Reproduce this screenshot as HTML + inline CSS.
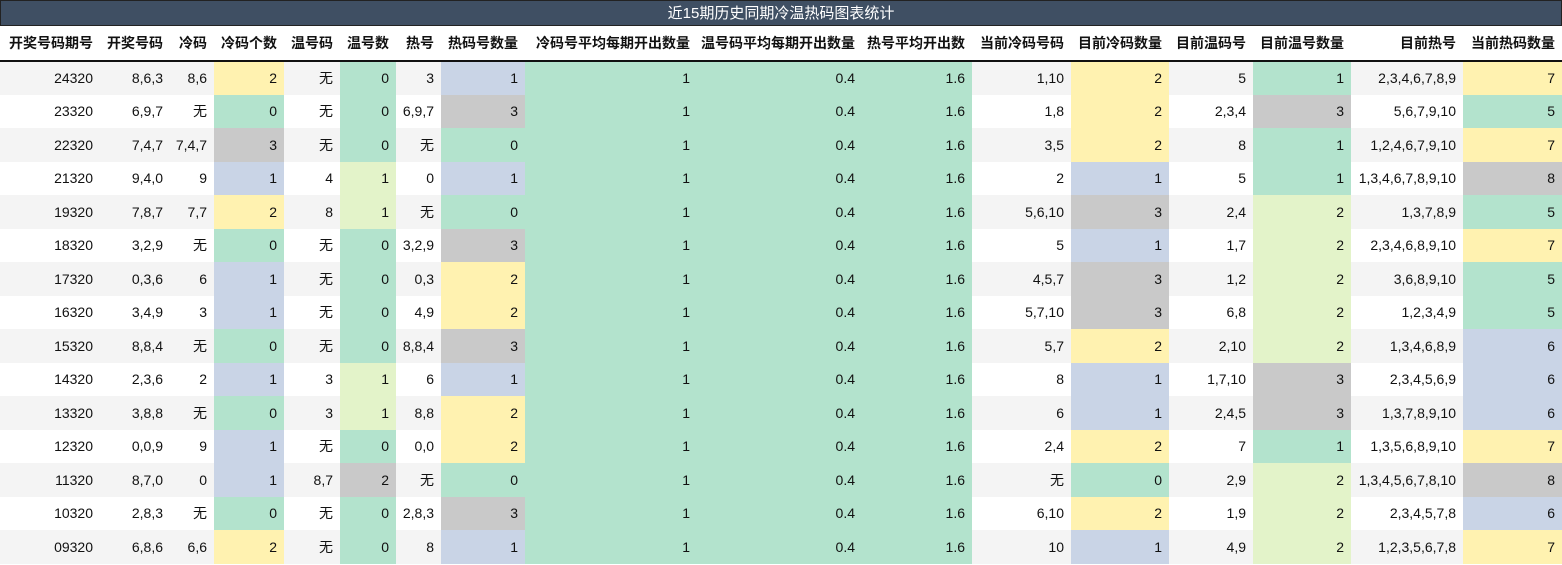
<!DOCTYPE html>
<html><head><meta charset="utf-8"><style>
*{margin:0;padding:0;box-sizing:border-box}
body{width:1562px;height:565px;overflow:hidden;background:#fff;font-family:"Liberation Sans","Noto Sans CJK SC",sans-serif;font-size:14px;color:#111}
.t{height:26px;background:#3f4f63;color:#fff;text-align:center;line-height:25px;font-size:15px;border:1px solid #222}
table{border-collapse:collapse;table-layout:fixed;width:1562px}
th{height:35px;font-weight:bold;text-align:right;padding-right:7px;border-bottom:2px solid #111;white-space:nowrap;font-size:14px}
td{height:33.5px;text-align:right;padding-right:7px;white-space:nowrap}
tr:nth-child(odd) td{background:#f4f4f4}
tr:nth-child(even) td{background:#fff}
tr td.Y{background:#fff2b0}tr td.G{background:#b3e3cd}tr td.B{background:#c9d4e6}tr td.X{background:#c9c9c9}tr td.L{background:#e3f3c9}
</style></head><body>
<div class="t">近15期历史同期冷温热码图表统计</div>
<table>
<colgroup><col style="width:100px"><col style="width:70px"><col style="width:44px"><col style="width:70px"><col style="width:56px"><col style="width:56px"><col style="width:45px"><col style="width:84px"><col style="width:172px"><col style="width:165px"><col style="width:110px"><col style="width:99px"><col style="width:98px"><col style="width:84px"><col style="width:98px"><col style="width:112px"><col style="width:99px"></colgroup>
<thead><tr><th>开奖号码期号</th><th>开奖号码</th><th>冷码</th><th>冷码个数</th><th>温号码</th><th>温号数</th><th>热号</th><th>热码号数量</th><th>冷码号平均每期开出数量</th><th>温号码平均每期开出数量</th><th>热号平均开出数</th><th>当前冷码号码</th><th>目前冷码数量</th><th>目前温码号</th><th>目前温号数量</th><th>目前热号</th><th>当前热码数量</th></tr></thead>
<tbody>
<tr><td>24320</td><td>8,6,3</td><td>8,6</td><td class="Y">2</td><td>无</td><td class="G">0</td><td>3</td><td class="B">1</td><td class="G">1</td><td class="G">0.4</td><td class="G">1.6</td><td>1,10</td><td class="Y">2</td><td>5</td><td class="G">1</td><td>2,3,4,6,7,8,9</td><td class="Y">7</td></tr>
<tr><td>23320</td><td>6,9,7</td><td>无</td><td class="G">0</td><td>无</td><td class="G">0</td><td>6,9,7</td><td class="X">3</td><td class="G">1</td><td class="G">0.4</td><td class="G">1.6</td><td>1,8</td><td class="Y">2</td><td>2,3,4</td><td class="X">3</td><td>5,6,7,9,10</td><td class="G">5</td></tr>
<tr><td>22320</td><td>7,4,7</td><td>7,4,7</td><td class="X">3</td><td>无</td><td class="G">0</td><td>无</td><td class="G">0</td><td class="G">1</td><td class="G">0.4</td><td class="G">1.6</td><td>3,5</td><td class="Y">2</td><td>8</td><td class="G">1</td><td>1,2,4,6,7,9,10</td><td class="Y">7</td></tr>
<tr><td>21320</td><td>9,4,0</td><td>9</td><td class="B">1</td><td>4</td><td class="L">1</td><td>0</td><td class="B">1</td><td class="G">1</td><td class="G">0.4</td><td class="G">1.6</td><td>2</td><td class="B">1</td><td>5</td><td class="G">1</td><td>1,3,4,6,7,8,9,10</td><td class="X">8</td></tr>
<tr><td>19320</td><td>7,8,7</td><td>7,7</td><td class="Y">2</td><td>8</td><td class="L">1</td><td>无</td><td class="G">0</td><td class="G">1</td><td class="G">0.4</td><td class="G">1.6</td><td>5,6,10</td><td class="X">3</td><td>2,4</td><td class="L">2</td><td>1,3,7,8,9</td><td class="G">5</td></tr>
<tr><td>18320</td><td>3,2,9</td><td>无</td><td class="G">0</td><td>无</td><td class="G">0</td><td>3,2,9</td><td class="X">3</td><td class="G">1</td><td class="G">0.4</td><td class="G">1.6</td><td>5</td><td class="B">1</td><td>1,7</td><td class="L">2</td><td>2,3,4,6,8,9,10</td><td class="Y">7</td></tr>
<tr><td>17320</td><td>0,3,6</td><td>6</td><td class="B">1</td><td>无</td><td class="G">0</td><td>0,3</td><td class="Y">2</td><td class="G">1</td><td class="G">0.4</td><td class="G">1.6</td><td>4,5,7</td><td class="X">3</td><td>1,2</td><td class="L">2</td><td>3,6,8,9,10</td><td class="G">5</td></tr>
<tr><td>16320</td><td>3,4,9</td><td>3</td><td class="B">1</td><td>无</td><td class="G">0</td><td>4,9</td><td class="Y">2</td><td class="G">1</td><td class="G">0.4</td><td class="G">1.6</td><td>5,7,10</td><td class="X">3</td><td>6,8</td><td class="L">2</td><td>1,2,3,4,9</td><td class="G">5</td></tr>
<tr><td>15320</td><td>8,8,4</td><td>无</td><td class="G">0</td><td>无</td><td class="G">0</td><td>8,8,4</td><td class="X">3</td><td class="G">1</td><td class="G">0.4</td><td class="G">1.6</td><td>5,7</td><td class="Y">2</td><td>2,10</td><td class="L">2</td><td>1,3,4,6,8,9</td><td class="B">6</td></tr>
<tr><td>14320</td><td>2,3,6</td><td>2</td><td class="B">1</td><td>3</td><td class="L">1</td><td>6</td><td class="B">1</td><td class="G">1</td><td class="G">0.4</td><td class="G">1.6</td><td>8</td><td class="B">1</td><td>1,7,10</td><td class="X">3</td><td>2,3,4,5,6,9</td><td class="B">6</td></tr>
<tr><td>13320</td><td>3,8,8</td><td>无</td><td class="G">0</td><td>3</td><td class="L">1</td><td>8,8</td><td class="Y">2</td><td class="G">1</td><td class="G">0.4</td><td class="G">1.6</td><td>6</td><td class="B">1</td><td>2,4,5</td><td class="X">3</td><td>1,3,7,8,9,10</td><td class="B">6</td></tr>
<tr><td>12320</td><td>0,0,9</td><td>9</td><td class="B">1</td><td>无</td><td class="G">0</td><td>0,0</td><td class="Y">2</td><td class="G">1</td><td class="G">0.4</td><td class="G">1.6</td><td>2,4</td><td class="Y">2</td><td>7</td><td class="G">1</td><td>1,3,5,6,8,9,10</td><td class="Y">7</td></tr>
<tr><td>11320</td><td>8,7,0</td><td>0</td><td class="B">1</td><td>8,7</td><td class="X">2</td><td>无</td><td class="G">0</td><td class="G">1</td><td class="G">0.4</td><td class="G">1.6</td><td>无</td><td class="G">0</td><td>2,9</td><td class="L">2</td><td>1,3,4,5,6,7,8,10</td><td class="X">8</td></tr>
<tr><td>10320</td><td>2,8,3</td><td>无</td><td class="G">0</td><td>无</td><td class="G">0</td><td>2,8,3</td><td class="X">3</td><td class="G">1</td><td class="G">0.4</td><td class="G">1.6</td><td>6,10</td><td class="Y">2</td><td>1,9</td><td class="L">2</td><td>2,3,4,5,7,8</td><td class="B">6</td></tr>
<tr><td>09320</td><td>6,8,6</td><td>6,6</td><td class="Y">2</td><td>无</td><td class="G">0</td><td>8</td><td class="B">1</td><td class="G">1</td><td class="G">0.4</td><td class="G">1.6</td><td>10</td><td class="B">1</td><td>4,9</td><td class="L">2</td><td>1,2,3,5,6,7,8</td><td class="Y">7</td></tr>
</tbody></table>
</body></html>
